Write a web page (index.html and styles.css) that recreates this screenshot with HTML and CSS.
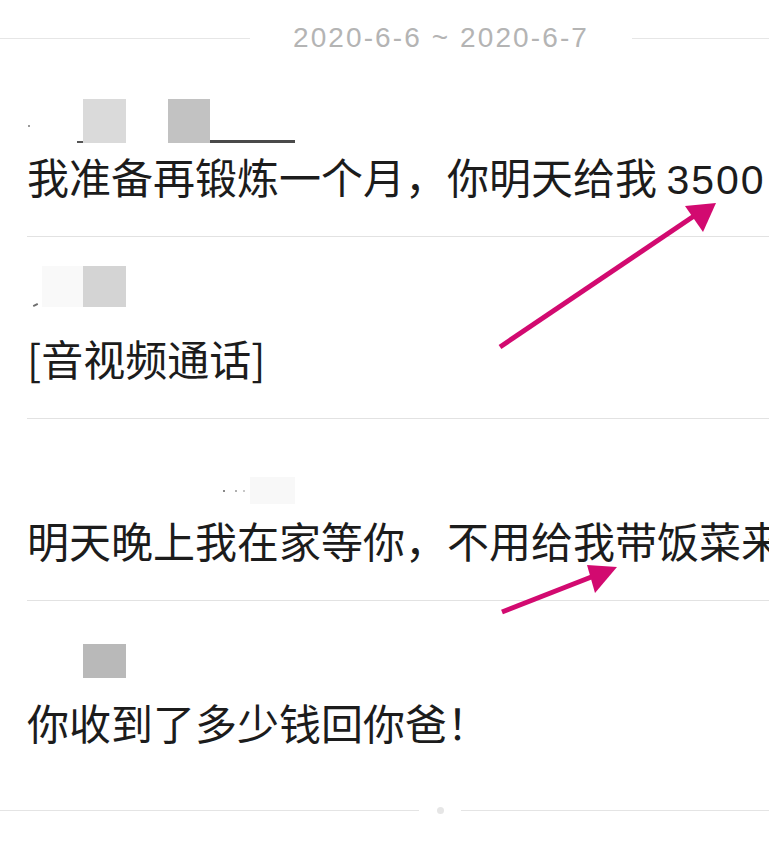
FILE: index.html
```html
<!DOCTYPE html>
<html lang="zh-CN">

<head>
    <meta charset="UTF-8" />
    <meta name="viewport" content="width=device-width, initial-scale=1.0" />
    <title>聊天记录</title>
    <link rel="stylesheet" href="styles.css">
</head>

<body>
    <div class="page">
        <div class="date-bar">
            <span class="rule rule-left"></span>
            <span class="date">2020-6-6 ~ 2020-6-7</span>
            <span class="rule rule-right"></span>
        </div>

        <div class="row row-1">
            <div class="name">
                <span class="speck"></span>
                <span class="stub"></span>
                <span class="blob blob-light"></span>
                <span class="blob blob-mid"></span>
                <span class="underline"></span>
            </div>
            <p class="msg">我准备再锻炼一个月，你明天给我 <span class="num">3500</span></p>
        </div>

        <div class="row row-2">
            <div class="name">
                <span class="tick"></span>
                <span class="blob blob-ghost"></span>
                <span class="blob blob-soft"></span>
            </div>
            <p class="msg">[音视频通话]</p>
        </div>

        <div class="row row-3">
            <div class="name">
                <span class="speck speck-a"></span>
                <span class="speck speck-b"></span>
                <span class="speck speck-c"></span>
                <span class="blob blob-patch"></span>
            </div>
            <p class="msg">明天晚上我在家等你，不用给我带饭菜来</p>
        </div>

        <div class="row row-4">
            <div class="name">
                <span class="blob blob-dark"></span>
            </div>
            <p class="msg">你收到了多少钱回你爸！</p>
        </div>

        <div class="end-bar">
            <span class="end-rule end-left"></span>
            <span class="end-dot"></span>
            <span class="end-rule end-right"></span>
        </div>

        <svg class="arrows" width="769" height="853" viewBox="0 0 769 853">
            <line x1="500" y1="347" x2="694" y2="216" />
            <polygon points="716,203 685,206 703,232" />
            <line x1="502" y1="612" x2="599" y2="574" />
            <polygon points="617,567 587,565 595,593" />
        </svg>
    </div>
</body>

</html>
```

FILE: styles.css
```css
body {
    margin: 0;
    background: #ffffff;
    overflow: hidden;
}

.page {
    position: relative;
    width: 769px;
    height: 853px;
    overflow: hidden;
    font-family: "Noto Sans CJK SC", "Noto Sans", sans-serif;
}

/* date header */
.date-bar {
    display: flex;
    align-items: center;
    height: 36px;
    margin-top: 20px;
    margin-bottom: -1px;
}

.rule {
    height: 1px;
    background: #e6e6e6;
}

.rule-left {
    width: 250px;
}

.rule-right {
    flex: 1;
}

.date {
    margin: 0 43px;
    font-family: "Liberation Sans", Arial, sans-serif;
    font-size: 28px;
    letter-spacing: 2.1px;
    color: #b4b4b4;
    white-space: nowrap;
}

/* message rows */
.row {
    margin-left: 27px;
    padding: 28px 0 29px;
    height: 124px;
    border-bottom: 1px solid #e2e2e2;
}

.row-4 {
    height: 152px;
    border-bottom: none;
}

.name {
    display: flex;
    align-items: flex-end;
    height: 62px;
    box-sizing: border-box;
}

.row-1 .name {
    padding-bottom: 2px;
}

.row-2 .name {
    padding-bottom: 20px;
}

.row-3 .name {
    padding-bottom: 5px;
}

.row-4 .name {
    padding-bottom: 13px;
}

.msg {
    margin: 0;
    font-size: 42px;
    line-height: 62px;
    color: #1c1c1c;
    white-space: nowrap;
}

.num {
    font-family: "Liberation Sans", Arial, sans-serif;
    font-size: 41px;
    letter-spacing: 2px;
}

/* blurred name stubs */
.blob {
    display: block;
}

.speck {
    width: 2px;
    height: 2px;
    margin: 0 0 16px 1px;
    background: #9a9a9a;
}

.stub {
    width: 6px;
    height: 2px;
    margin-left: 47px;
    background: #555555;
}

.blob-light {
    width: 43px;
    height: 44px;
    background: #dadada;
}

.blob-mid {
    width: 42px;
    height: 44px;
    margin-left: 42px;
    background: #c2c2c2;
}

.underline {
    width: 85px;
    height: 3px;
    background: #4a4a4a;
}

.tick {
    width: 5px;
    height: 2px;
    margin: 0 0 1px 6px;
    background: #6e6e6e;
    transform: rotate(-25deg);
}

.blob-ghost {
    width: 41px;
    height: 41px;
    margin-left: 4px;
    background: #f9f9f9;
}

.blob-soft {
    width: 43px;
    height: 41px;
    background: #d4d4d4;
}

.row-3 .speck {
    margin-bottom: 12px;
    background: #8a8a8a;
}

.speck-a {
    margin-left: 196px !important;
}

.speck-b {
    margin-left: 10px !important;
    background: #b0b0b0 !important;
}

.speck-c {
    margin-left: 6px !important;
    background: #c8c8c8 !important;
}

.blob-patch {
    width: 45px;
    height: 27px;
    margin-left: 5px;
    background: #f8f8f8;
}

.blob-dark {
    width: 43px;
    height: 34px;
    margin-left: 56px;
    background: #b9b9b9;
}

/* end divider */
.end-bar {
    display: flex;
    align-items: center;
    height: 7px;
    margin-top: -3px;
}

.end-rule {
    height: 1px;
    background: #e4e4e4;
}

.end-left {
    width: 419px;
}

.end-right {
    flex: 1;
}

.end-dot {
    width: 7px;
    height: 7px;
    margin: 0 17px 0 18px;
    border-radius: 50%;
    background: #e6e6e6;
}

/* annotation arrows */
.arrows {
    position: absolute;
    top: 0;
    left: 0;
    pointer-events: none;
}

.arrows line {
    stroke: #d20a70;
    stroke-width: 5;
}

.arrows polygon {
    fill: #d20a70;
}
```
